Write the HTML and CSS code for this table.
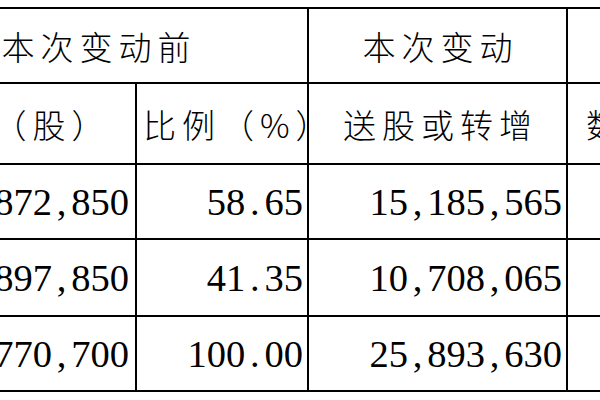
FILE: index.html
```html
<!DOCTYPE html>
<html lang="zh">
<head>
<meta charset="utf-8">
<link rel="stylesheet" href="styles.css">
</head>
<body>
<div class="page">
<table class="shares">
  <colgroup>
    <col class="c1"><col class="c2"><col class="c3"><col class="c4"><col class="c5">
  </colgroup>
  <tr class="r1">
    <td class="hd" colspan="2">本次变动前</td>
    <td class="hd">本次变动</td>
    <td class="hd" colspan="2">本次变动后</td>
  </tr>
  <tr class="r2">
    <td class="hd">数量（股）</td>
    <td class="hd">比例（%）</td>
    <td class="hd">送股或转增</td>
    <td class="hd hd-after">数量（股）</td>
    <td class="hd">比例（%）</td>
  </tr>
  <tr class="r3">
    <td class="num first">21<span class="p">,</span>872<span class="p">,</span>850</td>
    <td class="num">58<span class="p">.</span>65</td>
    <td class="num">15<span class="p">,</span>185<span class="p">,</span>565</td>
    <td class="num">37<span class="p">,</span>058<span class="p">,</span>415</td>
    <td class="num">58<span class="p">.</span>65</td>
  </tr>
  <tr class="r4">
    <td class="num first">15<span class="p">,</span>897<span class="p">,</span>850</td>
    <td class="num">41<span class="p">.</span>35</td>
    <td class="num">10<span class="p">,</span>708<span class="p">,</span>065</td>
    <td class="num">26<span class="p">,</span>605<span class="p">,</span>915</td>
    <td class="num">41<span class="p">.</span>35</td>
  </tr>
  <tr class="r5">
    <td class="num first">37<span class="p">,</span>770<span class="p">,</span>700</td>
    <td class="num">100<span class="p">.</span>00</td>
    <td class="num">25<span class="p">,</span>893<span class="p">,</span>630</td>
    <td class="num">63<span class="p">,</span>664<span class="p">,</span>330</td>
    <td class="num">100<span class="p">.</span>00</td>
  </tr>
</table>
</div>
</body>
</html>
```

FILE: styles.css
```css
html, body {
  margin: 0;
  padding: 0;
  background: #ffffff;
}
.page {
  width: 600px;
  height: 400px;
  overflow: hidden;
  padding-top: 7px;
  box-sizing: border-box;
}
.shares {
  border-collapse: collapse;
  table-layout: fixed;
  width: 1183px;
  margin-left: -117px;
  color: #000;
}
.c1 { width: 252px; }
.c2 { width: 172px; }
.c3 { width: 259px; }
.c4 { width: 300px; }
.c5 { width: 200px; }
.shares td {
  border: 2px solid #000;
  padding: 0;
  vertical-align: middle;
  white-space: nowrap;
  overflow: hidden;
}
.r1 { height: 75px; }
.r2 { height: 81px; }
.r3 { height: 75px; }
.r4 { height: 77px; }
.r5 { height: 75px; }
.shares .hd {
  font-family: "Noto Sans CJK SC", sans-serif;
  font-weight: 300;
  font-size: 33px;
  letter-spacing: 6px;
  text-align: center;
  padding-left: 6px;
}
.shares .hd-after {
  text-align: left;
  padding-left: 18px;
}
.shares .num {
  font-family: "Liberation Serif", serif;
  font-size: 38.5px;
  text-align: right;
  padding-right: 4px;
}
.shares .first {
  padding-right: 6px;
}
.p {
  display: inline-block;
  width: 19.25px;
  text-align: center;
}
```
